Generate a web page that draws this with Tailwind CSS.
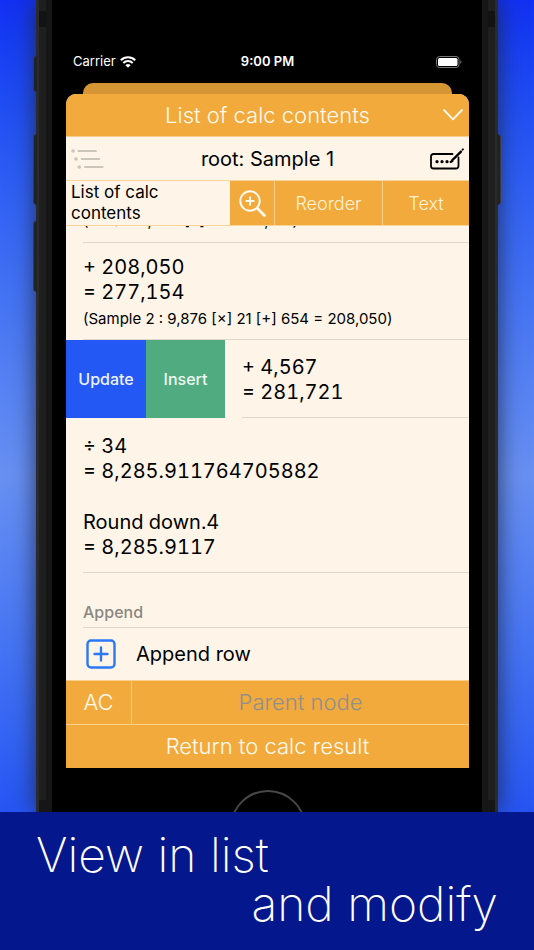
<!DOCTYPE html>
<html lang="en">
<head>
<meta charset="utf-8">
<title>List of calc contents</title>
<script src="https://cdn.jsdelivr.net/npm/@tailwindcss/browser@4"></script>
</head>
<body class="min-h-screen flex flex-col overflow-x-hidden bg-linear-to-b from-[#1230f2] via-[#6890f2] to-[#1230f2] font-['Inter','Liberation_Sans',sans-serif] text-black">
<main class="relative mx-9 flex-1 flex flex-col border-x-[3px] border-[#292b2e] bg-black shadow-[0_0_22px_rgba(30,40,70,0.9)]">
  <!-- side buttons of the phone -->
  <span class="absolute -left-[6px] top-14 h-9 w-1 rounded-l border-l border-[#3a3a3a] bg-[#222]"></span>
  <span class="absolute -left-[6px] top-[134px] h-[71px] w-1 rounded-l border-l border-[#3a3a3a] bg-[#222]"></span>
  <span class="absolute -left-[6px] top-[221px] h-[71px] w-1 rounded-l border-l border-[#3a3a3a] bg-[#222]"></span>
  <span class="absolute -right-[6px] top-[134px] h-[71px] w-1 rounded-r border-r border-[#3a3a3a] bg-[#222]"></span>
  <div class="relative flex-1 flex flex-col border-x-[7px] border-[#1f1f1f]">
  <span class="absolute -left-[7px] top-[11px] h-4 w-[7px] bg-[#131313]"></span>
  <span class="absolute -right-[7px] top-[11px] h-4 w-[7px] bg-[#131313]"></span>
  <span class="absolute -left-[7px] bottom-0 h-3 w-[7px] bg-[#161616]"></span>
  <span class="absolute -right-[7px] bottom-0 h-3 w-[7px] bg-[#161616]"></span>
  <div class="flex-1 flex flex-col border-x-[6px] border-[#161616] pl-[14px] pr-[13px]">
    <header class="grid grid-cols-3 items-center px-[7px] pt-[51px] h-[83px] pb-[10px] text-[13px] text-white">
      <div class="flex items-center gap-1">Carrier
        <svg class="w-4 h-3" viewBox="0 0 16 12" fill="none" stroke="#fff" stroke-width="2.1"><path d="M.8 4.2a10.3 10.3 0 0 1 14.4 0M3.3 7a6.7 6.7 0 0 1 9.4 0"/><path d="M8 11.8 5.4 9.2a3.7 3.7 0 0 1 5.2 0z" fill="#fff" stroke="none"/></svg>
      </div>
      <div class="text-center font-semibold">9:00 PM</div>
      <div class="flex justify-end">
        <svg class="w-[26px] h-3" viewBox="0 0 26 12"><rect x=".5" y=".5" width="22.5" height="11" rx="3" fill="none" stroke="#777"/><rect x="2" y="2" width="19.5" height="8" rx="1.6" fill="#fff"/><path d="M24.3 4.2c1.6.5 1.6 3.1 0 3.6z" fill="#777"/></svg>
      </div>
    </header>
    <div class="mx-[17px] h-[11px] rounded-t-[10px] bg-[#d69634]"></div>
    <section class="flex flex-col overflow-hidden rounded-t-[10px] bg-[#fef5e8]">
      <div class="relative flex h-[43px] items-center justify-center bg-[#f2aa3c] border-b border-[#f8cf8c]">
        <h1 class="text-[22px] font-light text-[#fffaf0]">List of calc contents</h1>
        <button aria-label="Close" class="absolute right-[6px] top-[15px]"><svg class="w-5 h-3" viewBox="0 0 20 12" fill="none" stroke="#fffaf0" stroke-width="1.8" stroke-linecap="round" stroke-linejoin="round"><path d="M1 1l9 9.3L19 1"/></svg></button>
      </div>
      <div class="grid h-[43px] grid-cols-[40px_1fr_40px] items-center">
        <button aria-label="Outline" class="pl-[5px]"><svg class="w-[33px] h-5" viewBox="0 0 33 20" stroke="#cbc4b9" stroke-width="2" stroke-linecap="round" fill="#cbc4b9"><path d="M7.500 2h17.500M10.700 10h17.500M14 18h17.500"/><g stroke="none"><circle cx="2" cy="2" r="1.8"/><circle cx="5" cy="10" r="1.8"/><circle cx="8.300" cy="18" r="1.800"/></g></svg></button>
        <h2 class="text-center text-[20px]">root: Sample 1</h2>
        <button aria-label="Rename" class="justify-self-end pr-[5px]"><svg class="w-[34px] h-[22px]" viewBox="0 0 34 22" fill="none" stroke="#000" stroke-width="1.8" stroke-linecap="round"><path d="M22.500 6H3.500a2.500 2.500 0 0 0-2.500 2.500v9.500a2.500 2.500 0 0 0 2.500 2.500h22.500a2.500 2.500 0 0 0 2.500-2.500V9.500"/><path d="M22 12.500 31 3.600" stroke-width="2.400"/><path d="M20.500 14l1.800-.6M32.700 1.600l.2-.2" stroke-width="2"/><g fill="#000" stroke="none"><circle cx="7" cy="13.700" r="1.600"/><circle cx="12" cy="13.700" r="1.600"/><circle cx="17" cy="13.700" r="1.600"/></g></svg></button>
      </div>
      <div class="grid h-[46px] grid-cols-[164fr_44fr_108fr_87fr] border-y border-[#f9d599] bg-[#fef5e8]">
        <div class="pl-[5px] pt-px text-[17px] leading-[21px]">List of calc<br>contents</div>
        <button aria-label="Zoom in" class="flex items-center justify-center bg-[#f2aa3c]"><svg class="w-[27px] h-[27px]" viewBox="0 0 27 27" fill="none" stroke="#fffaf0" stroke-width="2" stroke-linecap="round"><circle cx="11" cy="11" r="9.700"/><path d="M11 7.300v7.400M7.300 11h7.400"/><path d="M18.500 18.500l7 7" stroke-width="2.800"/></svg></button>
        <button class="border-l border-[#f9d08a] bg-[#f2aa3c] text-[18px] font-light text-[#fff3d6]">Reorder</button>
        <button class="border-l border-[#f9d08a] bg-[#f2aa3c] text-[18px] font-light text-[#fff3d6]">Text</button>
      </div>
      <ul class="text-[20px] tabular-nums">
        <li class="ml-[17px] h-[17px] overflow-hidden border-b border-[#dfd8cc]"><p class="-mt-[15px] text-[15px] leading-5 normal-nums">(Detail : 1,234 [×] 56 = 69,104)</p></li>
        <li class="ml-[17px] flex flex-col border-b border-[#dfd8cc] pt-3 pb-[11px]">
          <p class="leading-[25px]">+ 208,050<br>= 277,154</p>
          <p class="pt-1 text-[15px] leading-[19px] normal-nums">(Sample 2 : 9,876 [×] 21 [+] 654 = 208,050)</p>
        </li>
        <li class="flex h-[78px]">
          <button class="w-20 bg-[#2358f5] text-base font-medium text-[#eef2ff]">Update</button>
          <button class="w-[79px] bg-[#50ab80] text-base font-medium text-[#eefaf3]">Insert</button>
          <p class="ml-[17px] flex-1 border-b border-[#dfd8cc] pt-[15px] leading-[25px]">+ 4,567<br>= 281,721</p>
        </li>
        <li class="ml-[17px] border-b border-[#dfd8cc] pt-4 pb-3 leading-[25px]">
          <p>÷ 34<br>= 8,285.911764705882</p>
          <p class="pt-[26px]">Round down.4<br>= 8,285.9117</p>
        </li>
      </ul>
      <h3 class="ml-[17px] border-b border-[#dfd8cc] pt-[29px] pb-1 text-base font-medium leading-[21px] text-[#8b8781]">Append</h3>
      <button class="flex h-[52px] items-center gap-5 pl-[20px] text-left text-[20px]">
        <svg class="w-[30px] h-[30px]" viewBox="0 0 30 30" fill="none" stroke="#2b78f6" stroke-width="2.400" stroke-linecap="round"><rect x="1.500" y="1.500" width="27" height="27" rx="3.500"/><path d="M15 8.500v13M8.500 15h13"/></svg>
        <span>Append row</span>
      </button>
      <div class="grid grid-cols-[66px_1fr] border-t border-[#f8cf8c] bg-[#f2aa3c] text-[22px] font-light text-[#fffaf0]">
        <button class="h-11 border-b border-r border-[#f8cf8c]">AC</button>
        <button class="border-b border-[#f8cf8c] text-[#8f8f8c]" disabled>Parent node</button>
        <button class="col-span-2 h-[43px]">Return to calc result</button>
      </div>
    </section>
    <div class="relative h-11 overflow-hidden">
      <div class="absolute left-1/2 top-[22px] h-[76px] w-[76px] -translate-x-1/2 rounded-full border-2 border-[#484848]"></div>
    </div>
  </div>
  </div>
</main>
<footer class="relative z-10 bg-[#05178c] h-[138px] px-9 pt-[18px] text-[48px] leading-[49px] font-extralight text-white">
  <p>View in list</p>
  <p class="text-right">and modify</p>
</footer>
</body>
</html>
